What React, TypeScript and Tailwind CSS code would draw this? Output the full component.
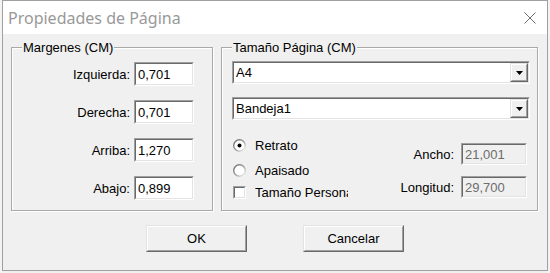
import React from "react";

function Sunken({
  className,
  inner,
  children,
}: {
  className: string;
  inner: string;
  children?: React.ReactNode;
}) {
  return (
    <div
      className={`border border-t-[#a0a0a0] border-l-[#a0a0a0] border-b-white border-r-white ${className}`}
    >
      <div
        className={`h-full w-full border border-t-[#696969] border-l-[#696969] border-b-[#e3e3e3] border-r-[#e3e3e3] ${inner}`}
      >
        {children}
      </div>
    </div>
  );
}

function Raised({
  className,
  inner,
  children,
}: {
  className: string;
  inner: string;
  children?: React.ReactNode;
}) {
  return (
    <div
      className={`border border-t-[#e3e3e3] border-l-[#e3e3e3] border-b-[#696969] border-r-[#696969] ${className}`}
    >
      <div
        className={`h-full w-full border border-t-white border-l-white border-b-[#a0a0a0] border-r-[#a0a0a0] ${inner}`}
      >
        {children}
      </div>
    </div>
  );
}

function MarginRow({ label, value }: { label: string; value: string }) {
  return (
    <div className="flex items-center h-[24px]">
      <span className="text-[13px] leading-[15px] text-black mr-[4px]">{label}</span>
      <Sunken
        className="w-[60px] h-[24px]"
        inner="bg-white flex items-center pl-[2px] text-[13px] leading-[15px] text-black"
      >
        {value}
      </Sunken>
    </div>
  );
}

function Combo({ value }: { value: string }) {
  return (
    <Sunken
      className="w-[298px] h-[23px]"
      inner="bg-white flex items-center text-[13px] leading-[15px] text-black"
    >
      <span className="flex-1 pl-[2px]">{value}</span>
      <Raised className="w-[18px] h-full" inner="bg-[#f0f0f0] flex items-center justify-center">
        <svg width="7" height="4" viewBox="0 0 7 4">
          <path d="M0 0 H7 L3.5 4 Z" fill="#000" />
        </svg>
      </Raised>
    </Sunken>
  );
}

function Radio({ checked }: { checked: boolean }) {
  const id = checked ? "ga" : "gb";
  return (
    <svg width="13" height="13" viewBox="0 0 13 13">
      <defs>
        <linearGradient id={id} x1="0" y1="0" x2="1" y2="1">
          <stop offset="0" stopColor="#6a6a6a" />
          <stop offset="0.5" stopColor="#9a9a9a" />
          <stop offset="1" stopColor="#ffffff" />
        </linearGradient>
      </defs>
      <circle cx="6.5" cy="6.5" r="5.8" fill="#fff" stroke={`url(#${id})`} strokeWidth="1.4" />
      {checked && <circle cx="6.5" cy="6.5" r="2" fill="#000" />}
    </svg>
  );
}

function GroupBox({
  label,
  className,
  children,
}: {
  label: string;
  className: string;
  children: React.ReactNode;
}) {
  return (
    <div
      className={`relative h-[164px] border border-[#a9a9a9] shadow-[inset_1px_1px_0_#fff,1px_1px_0_#fff] ${className}`}
    >
      <span className="absolute left-[10px] top-[-8px] bg-[#f0f0f0] px-[1px] text-[13px] leading-[15px] text-black whitespace-nowrap">
        {label}
      </span>
      {children}
    </div>
  );
}

export default function App() {
  return (
    <div className="w-[550px] h-[273px] bg-[#f0f0f0] flex items-start overflow-hidden font-['Liberation_Sans',Arial,sans-serif]">
      <div className="w-[2px] h-full bg-[#f3f3f3]" />
      <div className="w-[546px] h-[271px] border border-[#a0a0a0] flex flex-col bg-[#f0f0f0]">
        {/* Title bar */}
        <div className="h-[33px] bg-white flex items-center justify-between pl-[5px] pr-[11px]">
          <span className="font-['Noto_Sans',sans-serif] text-[16px] leading-[20px] text-[#999999]">
            Propiedades de Página
          </span>
          <svg width="12" height="12" viewBox="0 0 12 12">
            <path d="M0.5 0.5 L11.5 11.5 M11.5 0.5 L0.5 11.5" stroke="#6f6f6f" strokeWidth="1" />
          </svg>
        </div>

        {/* Body */}
        <div className="flex-1 flex flex-col pt-[13px] pl-[8px]">
          <div className="flex gap-[8px]">
            <GroupBox label="Margenes (CM)" className="w-[202px]">
              <div className="flex flex-col items-end gap-[14px] pt-[14px] pr-[18px]">
                <MarginRow label="Izquierda:" value="0,701" />
                <MarginRow label="Derecha:" value="0,701" />
                <MarginRow label="Arriba:" value="1,270" />
                <MarginRow label="Abajo:" value="0,899" />
              </div>
            </GroupBox>

            <GroupBox label="Tamaño Página (CM)" className="w-[317px]">
              <div className="flex flex-col pt-[13px] pl-[10px]">
                <Combo value="A4" />
                <div className="mt-[13px]">
                  <Combo value="Bandeja1" />
                </div>
              </div>
              <div className="flex justify-between pr-[10px]">
                <div className="flex flex-col pl-[11px]">
                  <div className="flex items-center h-[18px] mt-[16px]">
                    <Radio checked />
                    <span className="ml-[9px] text-[13px] leading-[15px] text-black">Retrato</span>
                  </div>
                  <div className="flex items-center h-[18px] mt-[7px]">
                    <Radio checked={false} />
                    <span className="ml-[9px] text-[13px] leading-[15px] text-black">Apaisado</span>
                  </div>
                  <div className="flex items-center h-[18px] mt-[4px]">
                    <Sunken className="w-[13px] h-[13px]" inner="bg-white" />
                    <span className="ml-[9px] w-[93px] overflow-hidden whitespace-nowrap text-[13px] leading-[15px] text-black">
                      Tamaño Personalizado
                    </span>
                  </div>
                </div>
                <div className="flex flex-col items-end">
                  <div className="flex items-center mt-[23px]">
                    <span className="mr-[7px] text-[13px] leading-[15px] text-black">Ancho:</span>
                    <Sunken
                      className="w-[66px] h-[22px]"
                      inner="bg-[#f0f0f0] flex items-center pl-[2px] text-[13px] leading-[15px] text-[#6d6d6d]"
                    >
                      21,001
                    </Sunken>
                  </div>
                  <div className="flex items-center mt-[11px]">
                    <span className="mr-[7px] text-[13px] leading-[15px] text-black">Longitud:</span>
                    <Sunken
                      className="w-[66px] h-[22px]"
                      inner="bg-[#f0f0f0] flex items-center pl-[2px] text-[13px] leading-[15px] text-[#6d6d6d]"
                    >
                      29,700
                    </Sunken>
                  </div>
                </div>
              </div>
            </GroupBox>
          </div>

          <div className="flex justify-center gap-[56px] mt-[14px] pr-[8px]">
            <Raised
              className="w-[101px] h-[27px]"
              inner="bg-[#f0f0f0] flex items-center justify-center text-[13px] leading-[15px] text-black"
            >
              OK
            </Raised>
            <Raised
              className="w-[101px] h-[27px]"
              inner="bg-[#f0f0f0] flex items-center justify-center text-[13px] leading-[15px] text-black"
            >
              Cancelar
            </Raised>
          </div>
        </div>
      </div>
      <div className="w-[2px] h-full bg-[#f3f3f3]" />
    </div>
  );
}
